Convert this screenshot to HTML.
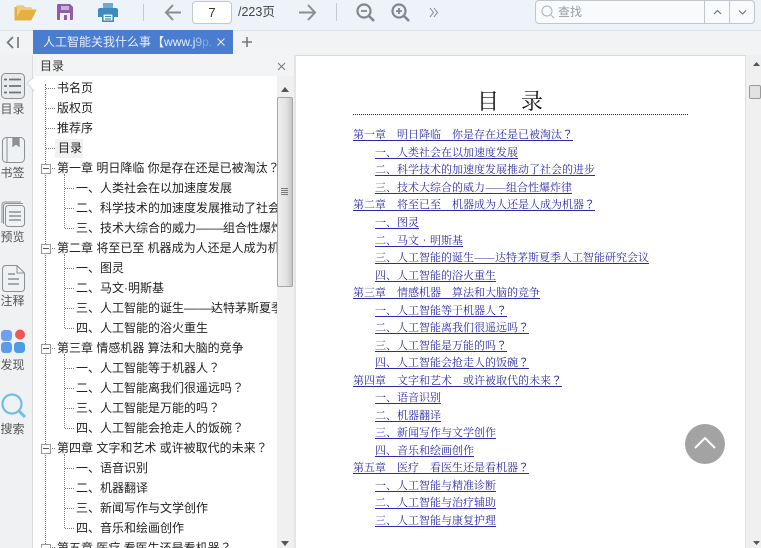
<!DOCTYPE html>
<html><head><meta charset="utf-8">
<style>
html,body{margin:0;padding:0;width:761px;height:548px;overflow:hidden;background:#fff}
body{position:relative;font-family:"Liberation Sans","Noto Sans CJK SC",sans-serif;color:#222}
.a{position:absolute}
svg{position:absolute;overflow:visible}
.t{position:absolute;font-size:12px;line-height:20px;white-space:nowrap;color:#222;height:20px}
.c{overflow:hidden}
.l{position:absolute;font-family:"Noto Serif CJK SC","Liberation Serif",serif;font-size:11px;line-height:14px;white-space:nowrap;color:#2c2ca8;text-decoration:underline;text-decoration-thickness:1px;text-underline-offset:2px}
.s{position:absolute;width:33px;text-align:center;left:-4px;font-size:12px;line-height:16px;color:#555}
.dv{position:absolute;border-left:1px dotted #777;width:0}
.dh{position:absolute;border-top:1px dotted #777;height:0}
.m{position:absolute;width:8px;height:8px;border:1px solid #999;background:#fff;left:41px}
.m:after{content:"";position:absolute;left:1px;top:3px;width:6px;height:1px;background:#555}
b{font-weight:400;font-family:"Noto Sans CJK TC",sans-serif}
i{font-style:normal;display:inline-block;width:27px;transform:scaleX(1.3);transform-origin:0 50%;white-space:nowrap}
.l i{width:21px;transform:scaleX(1.136);text-decoration:underline;text-decoration-thickness:1px;text-underline-offset:2px}
u{text-decoration:underline;text-decoration-thickness:1px;text-underline-offset:2px;display:inline-block;width:11px;text-align:center}
</style></head><body>
<div class="a" style="left:0;top:0;width:761px;height:30px;background:#edf3f9"></div>
<div class="a" style="left:0;top:30px;width:761px;height:24px;background:#f1f3f5;border-top:1px solid #e2e5e8;border-bottom:1px solid #d6d8da"></div>

<svg style="left:14px;top:3px" width="23" height="19" viewBox="0 0 23 19"><path d="M1 4V17H17L22 7H7L3 15V3H9L11 5H17V7" fill="#e5b042" stroke="#e5b042" stroke-width="1"/><path d="M3 3H9L11 5H17V7H7L3 14Z" fill="#efcb7c"/></svg>
<svg style="left:56px;top:3px" width="18" height="18" viewBox="0 0 18 18"><path d="M1 2Q1 1 2 1H14L17 4V16Q17 17 16 17H2Q1 17 1 16Z" fill="#8e5ea8"/><rect x="5" y="3" width="8" height="4" fill="#c9b0d6"/><rect x="4" y="10" width="10" height="7" fill="#f2eef6"/><rect x="8" y="12" width="3" height="5" fill="#8e5ea8"/></svg>
<svg style="left:98px;top:3px" width="20" height="19" viewBox="0 0 20 19"><rect x="5" y="0" width="10" height="5" fill="#6fa9cf"/><path d="M2 5H18Q20 5 20 7V14H16V11H4V14H0V7Q0 5 2 5Z" fill="#3f8bbd"/><rect x="4.8" y="10.8" width="10.4" height="7.4" fill="#fff" stroke="#3f8bbd" stroke-width="1.6"/><path d="M7 13.5H13M7 16H13" stroke="#3f8bbd" stroke-width="1.2"/></svg>
<div class="a" style="left:143px;top:4px;width:1px;height:17px;background:#c6cacd"></div>
<svg style="left:164px;top:3px" width="18" height="18" viewBox="0 0 18 18" fill="none" stroke="#868e96" stroke-width="2"><path d="M17 9.5H2M9 2L2 9.500L9 17"/></svg>
<div class="a" style="left:192px;top:1px;width:38px;height:21px;border:1px solid #c3c8cc;border-radius:4px;background:#fff;text-align:center;font-size:13px;line-height:21px;color:#333">7</div>
<div class="a" style="left:238px;top:3px;font-size:12.5px;line-height:18px;color:#444">/223页</div>
<svg style="left:299px;top:3px" width="18" height="18" viewBox="0 0 18 18" fill="none" stroke="#868e96" stroke-width="2"><path d="M0 9.500H16M9 2L16 9.500L9 17"/></svg>
<div class="a" style="left:336px;top:3px;width:1px;height:18px;background:#c6cacd"></div>
<svg style="left:356px;top:3px" width="19" height="19" viewBox="0 0 19 19" fill="none" stroke="#7f8890" stroke-width="2.200"><circle cx="8" cy="8" r="6.500"/><path d="M13 13L18 18" stroke-width="2.600"/><path d="M5 8H11" stroke-width="1.800"/></svg>
<svg style="left:391px;top:3px" width="19" height="19" viewBox="0 0 19 19" fill="none" stroke="#7f8890" stroke-width="2.200"><circle cx="8" cy="8" r="6.500"/><path d="M13 13L18 18" stroke-width="2.600"/><path d="M5 8H11M8 5V11" stroke-width="1.800"/></svg>
<svg style="left:429px;top:7px" width="10" height="10" viewBox="0 0 10 10" fill="none" stroke="#7f8890" stroke-width="1"><path d="M1 1L4.500 5.500L1 10M5 1L8.500 5.500L5 10"/></svg>

<div class="a" style="left:535px;top:0;width:218px;height:22px;border:1px solid #c0c6cb;border-radius:4px;background:#f8fafc"></div>
<div class="a" style="left:704px;top:1px;width:1px;height:22px;background:#c0c6cb"></div>
<div class="a" style="left:729px;top:1px;width:1px;height:22px;background:#c0c6cb"></div>
<svg style="left:541px;top:5px" width="14" height="14" viewBox="0 0 14 14" fill="none" stroke="#aab2b8" stroke-width="1"><circle cx="6" cy="6" r="5"/><path d="M10 10L13 13"/></svg>
<div class="a" style="left:558px;top:3px;font-size:12px;line-height:18px;color:#9a9ea2">查找</div>
<svg style="left:713px;top:9px" width="9" height="6" viewBox="0 0 9 6" fill="none" stroke="#666" stroke-width="1"><path d="M1 5L4.500 1.500L8 5"/></svg>
<svg style="left:738px;top:9px" width="9" height="6" viewBox="0 0 9 6" fill="none" stroke="#666" stroke-width="1"><path d="M1 1.500L4.500 5L8 1.500"/></svg>

<svg style="left:6px;top:36px" width="14" height="13" viewBox="0 0 14 13" fill="none" stroke="#6e757b" stroke-width="1.600"><path d="M7 1L1.500 6.500L7 12M12 1V12"/></svg>
<div class="a" style="left:33px;top:30px;width:200px;height:24px;background:#4a7cd0"></div>
<div class="a c" style="left:43px;top:31px;width:172px;height:22px;font-size:12px;line-height:22px;color:#e6eefb;white-space:nowrap">人工智能关我什么事<span style="font-family:'Noto Sans CJK TC',sans-serif;margin-left:1px;font-weight:700">【</span><span>www.j</span><span style="opacity:.6">9</span><span style="opacity:.35">p.</span></div>
<svg style="left:217px;top:38px" width="8" height="8" viewBox="0 0 8 8" stroke="#e6eefb" stroke-width="1"><path d="M0.500 0.500L7.500 7.500M7.500 0.500L0.500 7.500"/></svg>
<svg style="left:241px;top:36px" width="12" height="12" viewBox="0 0 12 12" stroke="#777" stroke-width="1.600"><path d="M6 1V11M1 6H11"/></svg>

<!-- Left rail -->
<div class="a" style="left:0;top:55px;width:32px;height:493px;background:#eff1f3;border-right:1px solid #d9dbdd"></div>
<div class="a" style="left:33px;top:55px;width:261px;height:21px;background:#f3f4f5"></div>
<div class="a" style="left:40px;top:57px;font-size:12px;line-height:18px;color:#333">目录</div>
<svg style="left:278px;top:63px" width="7" height="7" viewBox="0 0 7 7" stroke="#777" stroke-width="1"><path d="M0 0L7 7M7 0L0 7"/></svg>
<svg style="left:26px;top:77px" width="8" height="16" viewBox="0 0 8 16"><path d="M8 0L1 6L8 14" fill="#fff" stroke="#d4d6d8"/></svg>

<svg style="left:1px;top:73px" width="24" height="26" viewBox="0 0 24 26" fill="none"><rect x="0.500" y="0.500" width="23" height="25" rx="4" fill="#e8eaec" stroke="#8b9196"/><path d="M8 6.500H20M8 13H20M8 19.500H20" stroke="#6c7379" stroke-width="1.800"/><path d="M3 6.500H6M3 13H6M3 19.500H6" stroke="#6c7379" stroke-width="1.800"/></svg>
<div class="s" style="top:101px">目录</div>
<svg style="left:2px;top:137px" width="23" height="26" viewBox="0 0 23 26" fill="none" stroke="#8b9196"><rect x="0.500" y="0.500" width="22" height="25" rx="4"/><path d="M5 0.500V25" /><path d="M11 1V9L14 7L17 9V1" stroke-width="1.300" fill="#8b9196"/></svg>
<div class="s" style="top:165px">书签</div>
<svg style="left:1px;top:201px" width="25" height="26" viewBox="0 0 25 26" fill="none" stroke="#8b9196"><path d="M1 22V4Q1 1 4 1H20"/><path d="M2.500 23V5Q2.500 2.500 5 2.500H22"/><rect x="4.500" y="4.500" width="19" height="21" rx="3"/><path d="M8 11H20M8 15H20M8 19H20" stroke-width="1.500"/></svg>
<div class="s" style="top:229px">预览</div>
<svg style="left:2px;top:265px" width="23" height="27" viewBox="0 0 23 27" fill="none" stroke="#8b9196"><path d="M4 0.500H15L22.500 8V23Q22.500 26.500 19 26.500H4Q0.500 26.500 0.500 23V4Q0.500 0.500 4 0.500Z"/><path d="M15 0.500V8H22.500"/><path d="M6 9H13M6 14H17M6 19H17" stroke-width="1.600"/></svg>
<div class="s" style="top:293px">注释</div>
<svg style="left:1px;top:329px" width="24" height="25" viewBox="0 0 24 25"><rect x="0" y="1" width="11" height="11" rx="3.500" fill="#6e9ff0"/><circle cx="19" cy="5.500" r="5" fill="#f25757"/><rect x="0" y="13" width="11" height="11" rx="3.500" fill="#5a9bea"/><rect x="13" y="13" width="11" height="11" rx="3.500" fill="#4d9ce6"/></svg>
<div class="s" style="top:357px">发现</div>
<svg style="left:1px;top:393px" width="25" height="26" viewBox="0 0 25 26" fill="none" stroke="#6cbfe6" stroke-width="2.200"><circle cx="11" cy="11" r="9.500"/><path d="M18 18L24 24" stroke-width="3"/></svg>
<div class="s" style="top:421px">搜索</div>

<!-- Tree lines -->
<div class="dv" style="left:45px;top:84px;height:464px"></div>
<div class="dv" style="left:64px;top:174px;height:54px"></div>
<div class="dv" style="left:64px;top:254px;height:74px"></div>
<div class="dv" style="left:64px;top:354px;height:74px"></div>
<div class="dv" style="left:64px;top:454px;height:74px"></div>
<div class="dh" style="left:46px;top:88px;width:9px"></div>
<div class="dh" style="left:46px;top:108px;width:9px"></div>
<div class="dh" style="left:46px;top:128px;width:9px"></div>
<div class="dh" style="left:46px;top:148px;width:9px"></div>
<div class="dh" style="left:65px;top:188px;width:9px"></div>
<div class="dh" style="left:65px;top:208px;width:9px"></div>
<div class="dh" style="left:65px;top:228px;width:9px"></div>
<div class="dh" style="left:65px;top:268px;width:9px"></div>
<div class="dh" style="left:65px;top:288px;width:9px"></div>
<div class="dh" style="left:65px;top:308px;width:9px"></div>
<div class="dh" style="left:65px;top:328px;width:9px"></div>
<div class="dh" style="left:65px;top:368px;width:9px"></div>
<div class="dh" style="left:65px;top:388px;width:9px"></div>
<div class="dh" style="left:65px;top:408px;width:9px"></div>
<div class="dh" style="left:65px;top:428px;width:9px"></div>
<div class="dh" style="left:65px;top:468px;width:9px"></div>
<div class="dh" style="left:65px;top:488px;width:9px"></div>
<div class="dh" style="left:65px;top:508px;width:9px"></div>
<div class="dh" style="left:65px;top:528px;width:9px"></div>
<div class="dh" style="left:50px;top:168px;width:5px"></div>
<div class="dh" style="left:50px;top:248px;width:5px"></div>
<div class="dh" style="left:50px;top:348px;width:5px"></div>
<div class="dh" style="left:50px;top:448px;width:5px"></div>
<div class="dh" style="left:50px;top:547px;width:5px"></div>
<div class="m" style="top:164px"></div>
<div class="m" style="top:244px"></div>
<div class="m" style="top:344px"></div>
<div class="m" style="top:444px"></div>
<div class="m" style="top:544px"></div>
<div class="a" style="left:55px;top:139px;width:28px;height:19px;background:#f1f1f1"></div>

<!-- Tree -->
<div class="a c" style="left:33px;top:76px;width:244px;height:472px">
<div class="t" style="left:24px;top:2px">书名页</div>
<div class="t" style="left:24px;top:22px">版权页</div>
<div class="t" style="left:24px;top:42px">推荐序</div>
<div class="t" style="left:25px;top:62px">目录</div>
<div class="t" style="left:24px;top:82px">第一章 明日降临 你是存在还是已被淘汰<b>？</b></div>
<div class="t" style="left:43px;top:102px">一、人类社会在以加速度发展</div>
<div class="t" style="left:43px;top:122px">二、科学技术的加速度发展推动了社会的进步</div>
<div class="t" style="left:43px;top:142px">三、技术大综合的威力<i>——</i>组合性爆炸律</div>
<div class="t" style="left:24px;top:162px">第二章 将至已至 机器成为人还是人成为机器<b>？</b></div>
<div class="t" style="left:43px;top:182px">一、图灵</div>
<div class="t" style="left:43px;top:202px">二、马文·明斯基</div>
<div class="t" style="left:43px;top:222px">三、人工智能的诞生<i>——</i>达特茅斯夏季人工智能研究会议</div>
<div class="t" style="left:43px;top:242px">四、人工智能的浴火重生</div>
<div class="t" style="left:24px;top:262px">第三章 情感机器 算法和大脑的竞争</div>
<div class="t" style="left:43px;top:282px">一、人工智能等于机器人<b>？</b></div>
<div class="t" style="left:43px;top:302px">二、人工智能离我们很遥远吗<b>？</b></div>
<div class="t" style="left:43px;top:322px">三、人工智能是万能的吗<b>？</b></div>
<div class="t" style="left:43px;top:342px">四、人工智能会抢走人的饭碗<b>？</b></div>
<div class="t" style="left:24px;top:362px">第四章 文字和艺术 或许被取代的未来<b>？</b></div>
<div class="t" style="left:43px;top:382px">一、语音识别</div>
<div class="t" style="left:43px;top:402px">二、机器翻译</div>
<div class="t" style="left:43px;top:422px">三、新闻写作与文学创作</div>
<div class="t" style="left:43px;top:442px">四、音乐和绘画创作</div>
<div class="t" style="left:24px;top:462px">第五章 医疗 看医生还是看机器<b>？</b></div>
</div>

<!-- Tree scrollbar -->
<div class="a" style="left:277px;top:76px;width:17px;height:472px;background:#f0f0f0"></div>
<svg style="left:281px;top:87px" width="8" height="5" viewBox="0 0 8 5"><path d="M0 5L4 0L8 5Z" fill="#555"/></svg>
<div class="a" style="left:277px;top:97px;width:14px;height:188px;border:1px solid #a6a6a6;border-radius:2px;background:linear-gradient(90deg,#eee,#e4e4e4 55%,#c6c6c6)"></div>
<div class="a" style="left:281px;top:188px;width:7px;height:1px;background:#777;box-shadow:0 2px 0 #777,0 4px 0 #777,0 6px 0 #777"></div>
<svg style="left:281px;top:541px" width="8" height="5" viewBox="0 0 8 5"><path d="M0 0L4 5L8 0Z" fill="#555"/></svg>
<div class="a" style="left:294px;top:55px;width:2px;height:493px;background:#e4e5e6"></div>

<!-- Content -->
<div class="a" style="left:477px;top:87px;font-family:'Noto Serif CJK SC','Liberation Serif',serif;font-size:22px;line-height:28px;color:#111;white-space:pre">目　录</div>
<div class="a" style="left:353px;top:114px;width:335px;border-top:1px dotted #333"></div>
<a class="l" style="left:353px;top:127px">第一章　明日降临　你是存在还是已被淘汰<b>？</b></a>
<a class="l" style="left:375px;top:145px">一、人类社会在以加速度发展</a>
<a class="l" style="left:375px;top:162px">二、科学技术的加速度发展推动了社会的进步</a>
<a class="l" style="left:375px;top:180px">三、技术大综合的威力<i>——</i>组合性爆炸律</a>
<a class="l" style="left:353px;top:197px">第二章　将至已至　机器成为人还是人成为机器<b>？</b></a>
<a class="l" style="left:375px;top:215px">一、图灵</a>
<a class="l" style="left:375px;top:233px">二、马文<u>•</u>明斯基</a>
<a class="l" style="left:375px;top:250px">三、人工智能的诞生<i>——</i>达特茅斯夏季人工智能研究会议</a>
<a class="l" style="left:375px;top:268px">四、人工智能的浴火重生</a>
<a class="l" style="left:353px;top:285px">第三章　情感机器　算法和大脑的竞争</a>
<a class="l" style="left:375px;top:303px">一、人工智能等于机器人<b>？</b></a>
<a class="l" style="left:375px;top:320px">二、人工智能离我们很遥远吗<b>？</b></a>
<a class="l" style="left:375px;top:338px">三、人工智能是万能的吗<b>？</b></a>
<a class="l" style="left:375px;top:355px">四、人工智能会抢走人的饭碗<b>？</b></a>
<a class="l" style="left:353px;top:373px">第四章　文字和艺术　或许被取代的未来<b>？</b></a>
<a class="l" style="left:375px;top:390px">一、语音识别</a>
<a class="l" style="left:375px;top:408px">二、机器翻译</a>
<a class="l" style="left:375px;top:425px">三、新闻写作与文学创作</a>
<a class="l" style="left:375px;top:443px">四、音乐和绘画创作</a>
<a class="l" style="left:353px;top:460px">第五章　医疗　看医生还是看机器<b>？</b></a>
<a class="l" style="left:375px;top:478px">一、人工智能与精准诊断</a>
<a class="l" style="left:375px;top:495px">二、人工智能与治疗辅助</a>
<a class="l" style="left:375px;top:513px">三、人工智能与康复护理</a>

<!-- Back to top -->
<div class="a" style="left:685px;top:424px;width:40px;height:40px;border-radius:50%;background:#a3a3a3"></div>
<svg style="left:694px;top:436px" width="22" height="14" viewBox="0 0 22 14" fill="none" stroke="#fff" stroke-width="2"><path d="M1 12L11 2L21 12"/></svg>

<!-- Main scrollbar -->
<div class="a" style="left:745px;top:55px;width:16px;height:493px;background:#f0f0f0;border-left:1px solid #e2e2e2;box-sizing:border-box"></div>
<svg style="left:753px;top:62px" width="7" height="4" viewBox="0 0 7 4"><path d="M0 4L3.500 0L7 4Z" fill="#555"/></svg>
<div class="a" style="left:749px;top:85px;width:12px;height:14px;border:1px solid #9a9a9a;border-radius:2px;background:#e2e2e2;box-sizing:border-box"></div>
<svg style="left:753px;top:541px" width="7" height="4" viewBox="0 0 7 4"><path d="M0 0L3.500 4L7 0Z" fill="#555"/></svg>
</body></html>
